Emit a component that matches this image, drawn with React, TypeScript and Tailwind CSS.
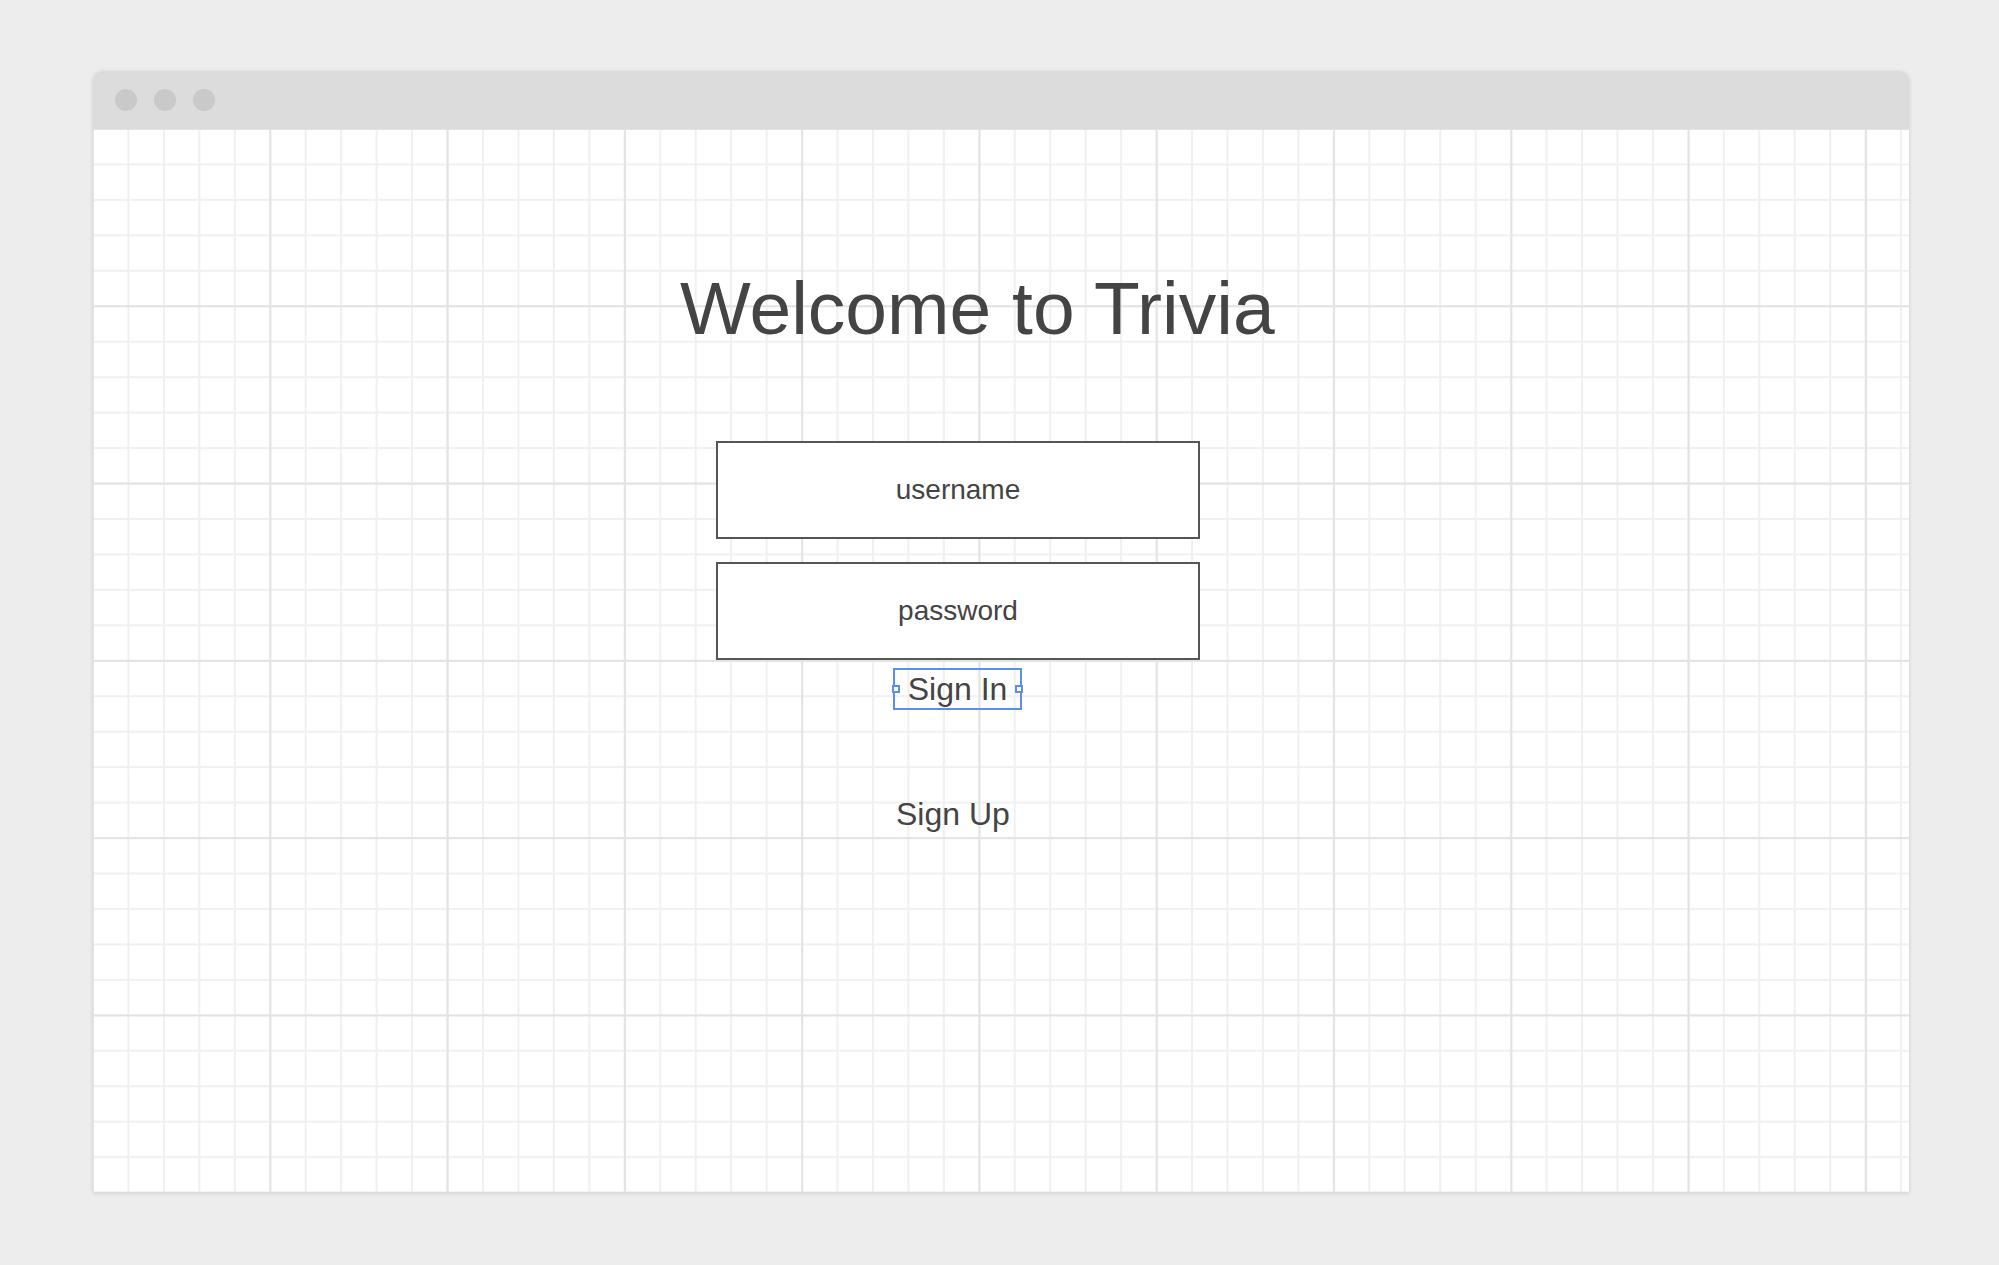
import React from "react";

export default function App() {
  return (
    <div className="w-[1999px] h-[1265px] bg-[#ededed] pt-[71px] pl-[93px] font-['Liberation_Sans',Arial,sans-serif] text-[#444444]">
      <div className="w-[1816px] h-[1121px] flex flex-col rounded-t-[9px] overflow-hidden shadow-[0_1px_4px_rgba(0,0,0,0.14)]">
        <div className="h-[58px] shrink-0 bg-[#dcdcdc] flex items-center pl-[22px] gap-[17px]">
          <div className="w-[22px] h-[22px] rounded-full bg-[#c9c9c9]" />
          <div className="w-[22px] h-[22px] rounded-full bg-[#c9c9c9]" />
          <div className="w-[22px] h-[22px] rounded-full bg-[#c9c9c9]" />
        </div>
        <div className="flex-1 bg-white bg-[linear-gradient(to_right,#e3e3e3_2px,transparent_2px),linear-gradient(to_bottom,#e3e3e3_2px,transparent_2px),linear-gradient(to_right,#f0f0f0_2px,transparent_2px),linear-gradient(to_bottom,#f0f0f0_2px,transparent_2px)] bg-[size:177.3px_177.3px,177.3px_177.3px,35.46px_35.46px,35.46px_35.46px] bg-[position:-1px_-1px,-1px_-1px,-1px_-1px,-1px_-1px] flex flex-col items-start pt-[142px]">
          <h1 className="ml-[587px] text-[75px] leading-[75px] whitespace-nowrap">Welcome to Trivia</h1>
          <div className="ml-[623px] mt-[95px] w-[484px] h-[98px] border-2 border-[#555555] bg-white flex items-center justify-center text-[28px]">
            username
          </div>
          <div className="ml-[623px] mt-[23px] w-[484px] h-[98px] border-2 border-[#555555] bg-white flex items-center justify-center text-[28px]">
            password
          </div>
          <div className="ml-[800px] mt-[8px] relative w-[129px] h-[42px] border-2 border-[#5b8ef0] flex items-center justify-center text-[32px] leading-[32px]">
            Sign In
            <span className="absolute left-[-3px] top-1/2 -translate-y-1/2 w-[8px] h-[8px] bg-white border-2 border-[#5b8ef0]" />
            <span className="absolute right-[-3px] top-1/2 -translate-y-1/2 w-[8px] h-[8px] bg-white border-2 border-[#5b8ef0]" />
          </div>
          <div className="ml-[803px] mt-[88px] text-[32px] leading-[32px] whitespace-nowrap">Sign Up</div>
        </div>
      </div>
    </div>
  );
}
